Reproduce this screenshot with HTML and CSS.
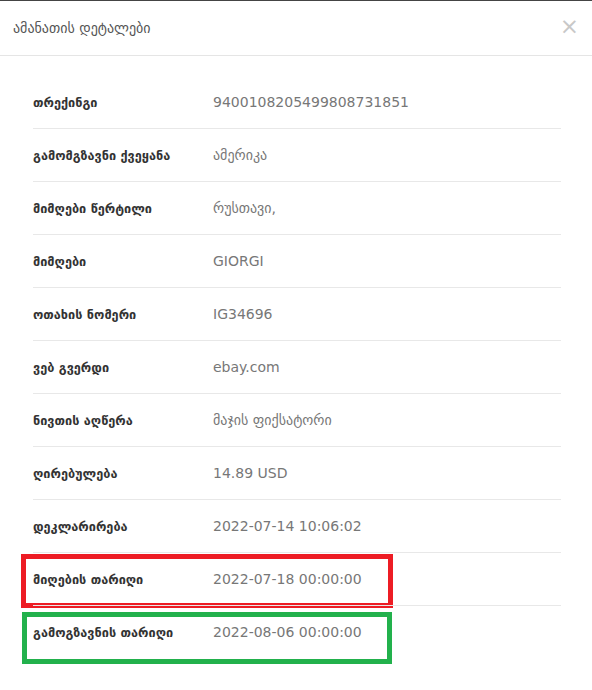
FILE: index.html
```html
<!DOCTYPE html>
<html lang="ka">
<head>
    <meta charset="UTF-8">
    <meta name="viewport" content="width=device-width, initial-scale=1.0">
    <title>ამანათის დეტალები</title>
    <link rel="stylesheet" href="styles.css">
</head>
<body>
<div class="modal">
    <div class="modal-header">
        <span class="modal-title">ამანათის დეტალები</span>
        <span class="close">&times;</span>
    </div>
    <div class="modal-body">
        <div class="row"><div class="label">თრექინგი</div><div class="value">9400108205499808731851</div></div>
        <div class="row"><div class="label">გამომგზავნი ქვეყანა</div><div class="value">ამერიკა</div></div>
        <div class="row"><div class="label">მიმღები წერტილი</div><div class="value">რუსთავი,</div></div>
        <div class="row"><div class="label">მიმღები</div><div class="value">GIORGI</div></div>
        <div class="row"><div class="label">ოთახის ნომერი</div><div class="value">IG34696</div></div>
        <div class="row"><div class="label">ვებ გვერდი</div><div class="value">ebay.com</div></div>
        <div class="row"><div class="label">ნივთის აღწერა</div><div class="value">მაჯის ფიქსატორი</div></div>
        <div class="row"><div class="label">ღირებულება</div><div class="value">14.89 USD</div></div>
        <div class="row"><div class="label">დეკლარირება</div><div class="value">2022-07-14 10:06:02</div></div>
        <div class="row mark-red"><div class="label">მიღების თარიღი</div><div class="value">2022-07-18 00:00:00</div></div>
        <div class="row mark-green"><div class="label">გამოგზავნის თარიღი</div><div class="value">2022-08-06 00:00:00</div></div>
    </div>
</div>
</body>
</html>
```

FILE: styles.css
```css
body {
    margin: 0;
    background-color: #fff;
    font-family: "DejaVu Sans", sans-serif;
}

.modal {
    width: 592px;
    height: 690px;
    background-color: #fff;
    border-top: 1px solid #444;
    box-sizing: border-box;
}

.modal-header {
    height: 54px;
    padding: 0 13px 0 13px;
    display: flex;
    align-items: center;
    justify-content: space-between;
    border-bottom: 1px solid #e5e5e5;
}

.modal-title {
    font-size: 14px;
    color: #555;
}

.close {
    font-size: 23px;
    color: #c8c8c8;
    line-height: 1;
    margin-top: -4px;
}

.modal-body {
    padding: 20px 31px 0 33px;
}

.row {
    position: relative;
    display: grid;
    grid-template-columns: 180px 1fr;
    align-items: center;
    height: 52px;
    border-top: 1px solid #e8e8e8;
}

.row:first-child {
    border-top: none;
}

.label {
    font-size: 12.7px;
    font-weight: bold;
    color: #333;
}

.value {
    font-size: 14px;
    color: #777;
}

/* рамки-пометки поверх строк */
.mark-red::after,
.mark-green::after {
    content: "";
    position: absolute;
    box-sizing: border-box;
    border: 5px solid;
}

.mark-red::after {
    left: -12px;
    top: 1px;
    width: 372px;
    height: 54px;
    border-color: #ed1c24;
}

.mark-green::after {
    left: -11px;
    top: 6px;
    width: 370px;
    height: 52px;
    border-color: #22b14c;
}
```
